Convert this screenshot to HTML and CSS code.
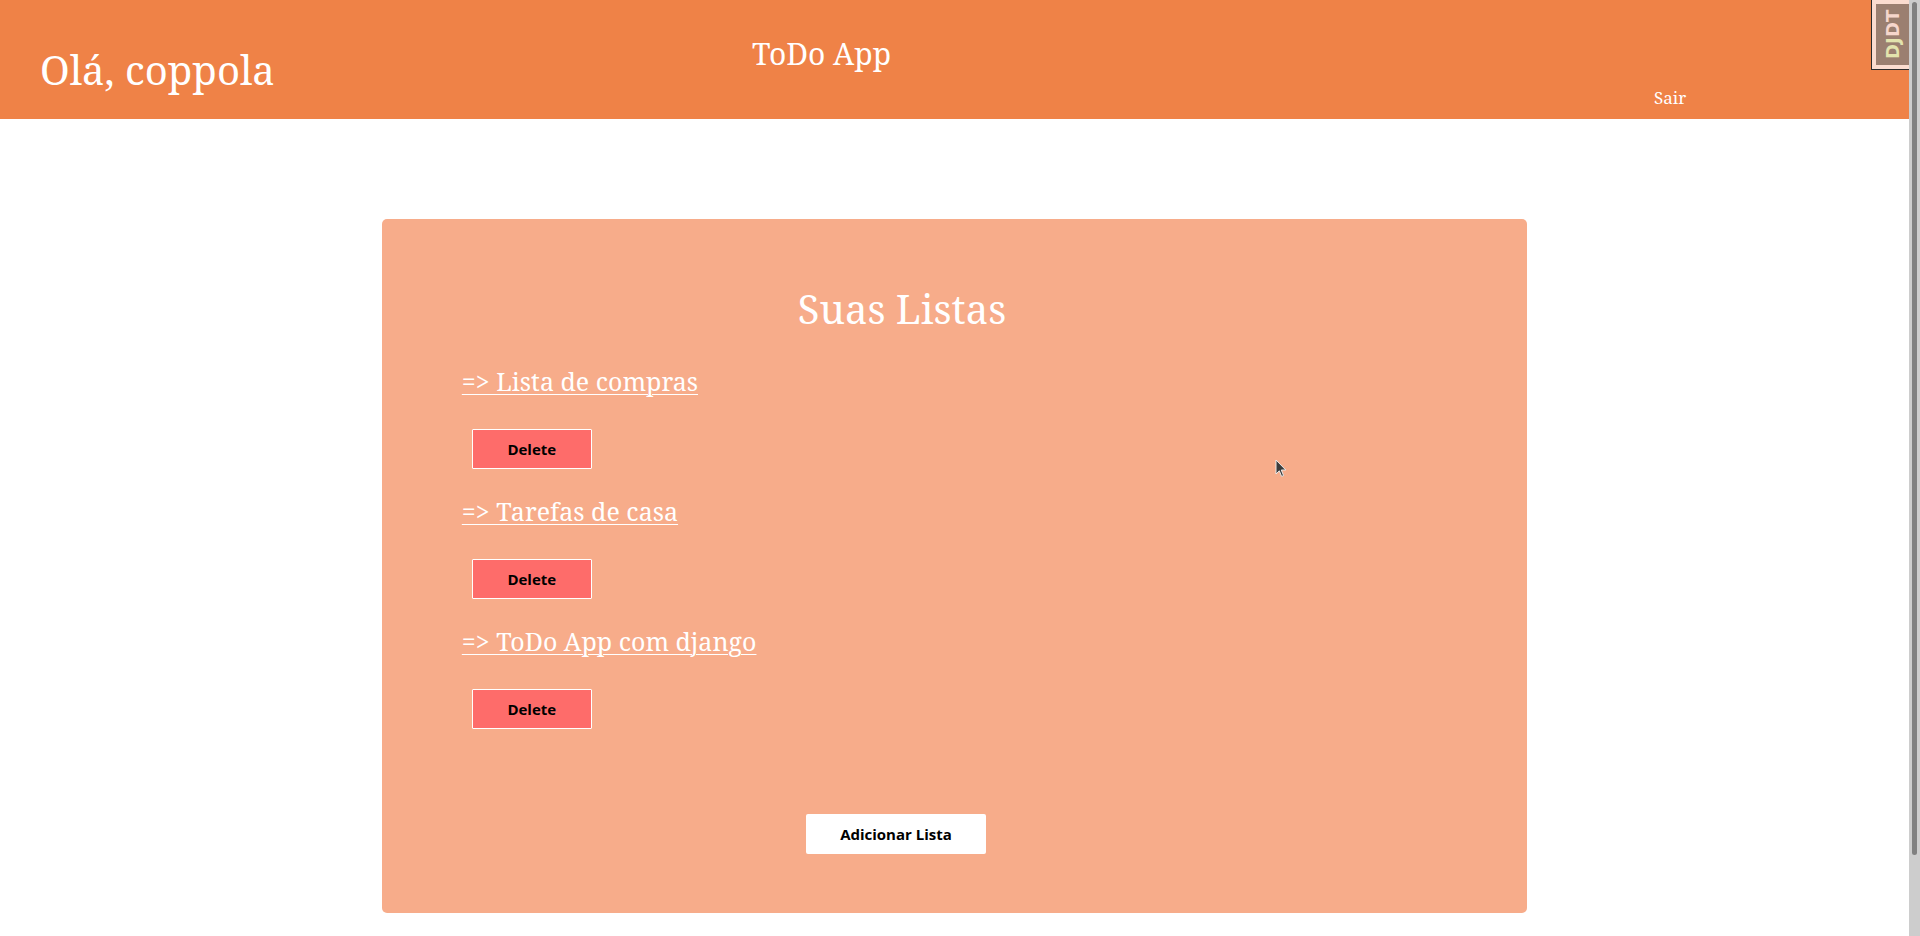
FILE: index.html
```html
<!DOCTYPE html>
<html lang="pt-BR">
<head>
<meta charset="utf-8">
<title>ToDo App</title>
<link rel="stylesheet" href="styles.css">
</head>
<body>
<div class="layout">
  <div class="page">
    <header class="topbar">
      <h1 class="greeting">Olá, coppola</h1>
      <div class="brand">ToDo App</div>
      <a class="logout" href="#">Sair</a>
    </header>

    <div class="djdt-handle">
      <div class="djdt-btn"><span class="djdt-dj">DJ</span><span class="djdt-dt">DT</span></div>
    </div>

    <main class="card">
      <div class="card-inner">
        <h2 class="card-title">Suas Listas</h2>
        <ul class="lists">
          <li class="list-item">
            <a class="list-link" href="#">=&gt; Lista de compras</a>
            <button class="btn-delete" type="button">Delete</button>
          </li>
          <li class="list-item">
            <a class="list-link" href="#">=&gt; Tarefas de casa</a>
            <button class="btn-delete" type="button">Delete</button>
          </li>
          <li class="list-item">
            <a class="list-link" href="#">=&gt; ToDo App com django</a>
            <button class="btn-delete" type="button">Delete</button>
          </li>
        </ul>
        <div class="card-actions">
          <button class="btn-add" type="button">Adicionar Lista</button>
        </div>
      </div>
    </main>

    <svg class="cursor" width="12" height="19" viewBox="0 0 12 19" aria-hidden="true">
      <path d="M1 1 L1 15 L4.3 11.8 L6.6 17.4 L8.6 16.6 L6.3 11 L10.8 11 Z" fill="#3c3c3c" stroke="#e8e8e8" stroke-width="1"/>
    </svg>
  </div>
  <div class="scrollbar"><div class="scroll-thumb"></div></div>
</div>
</body>
</html>
```

FILE: styles.css
```css
html, body {
  margin: 0;
  padding: 0;
  height: 100%;
  overflow: hidden;
  background: #ffffff;
}

body {
  font-family: "Noto Serif", "DejaVu Serif", serif;
}

.layout {
  display: flex;
  height: 936px;
}

.page {
  flex: 1;
  position: relative;
  min-width: 0;
}

/* header */
.topbar {
  display: grid;
  grid-template-columns: 712px 902px auto;
  align-items: start;
  height: 119px;
  padding-left: 40px;
  background: #ef8247;
  color: #ffffff;
  box-sizing: border-box;
}

.greeting {
  margin: 50px 0 0 0;
  font-size: 40px;
  font-weight: normal;
  line-height: 1;
  white-space: nowrap;
}

.brand {
  margin-top: 39px;
  font-size: 30px;
  line-height: 1;
  white-space: nowrap;
}

.logout {
  margin-top: 89px;
  font-size: 17px;
  line-height: 1;
  color: #ffffff;
  text-decoration: none;
  white-space: nowrap;
}

/* django debug toolbar handle */
.djdt-handle {
  position: absolute;
  top: 0;
  right: 0;
  padding: 4px 0 4px 4px;
  background: #fbdccf;
  border-left: 1px solid #2b2b2b;
  border-bottom: 1px solid #2b2b2b;
}

.djdt-btn {
  width: 33px;
  height: 61px;
  background: #9b7f70;
  display: flex;
  align-items: center;
  justify-content: center;
  writing-mode: vertical-rl;
  transform: rotate(180deg);
  font-family: "DejaVu Sans", sans-serif;
  font-weight: bold;
  font-size: 18px;
  line-height: 1;
}

.djdt-dj { color: #e3e3ad; }
.djdt-dt { color: #f6d6cc; }

/* card */
.card {
  display: block;
  width: 60%;
  margin: 100px auto 0;
  background: #f7ac8a;
  border-radius: 5px;
  box-sizing: border-box;
  padding: 70px 185px 59px 80px;
}

.card-title {
  margin: 0 0 40px 0;
  text-align: center;
  font-size: 40px;
  font-weight: normal;
  line-height: 1;
  color: #ffffff;
}

.lists {
  list-style: none;
  margin: 0;
  padding: 0;
  display: flex;
  flex-direction: column;
  gap: 30px;
}

.list-item {
  display: flex;
  flex-direction: column;
  align-items: flex-start;
  gap: 35px;
}

.list-link {
  font-size: 25px;
  line-height: 1;
  color: #ffffff;
  text-decoration: underline;
  text-decoration-thickness: 1px;
  text-underline-offset: 3px;
}

.btn-delete {
  margin-left: 10px;
  width: 120px;
  height: 40px;
  background: #fe6c6a;
  border: 1px solid #ffffff;
  border-radius: 1px;
  font-family: "Open Sans", sans-serif;
  font-weight: bold;
  font-size: 15px;
  color: #000000;
  padding: 0;
}

.card-actions {
  display: flex;
  justify-content: center;
  margin-top: 85px;
}

.btn-add {
  margin-right: 12px;
  width: 180px;
  height: 40px;
  background: #ffffff;
  border: none;
  border-radius: 2px;
  font-family: "Open Sans", sans-serif;
  font-weight: bold;
  font-size: 15px;
  color: #000000;
  padding: 0;
}

.cursor {
  position: absolute;
  left: 1275px;
  top: 459px;
}

/* fake scrollbar */
.scrollbar {
  width: 11px;
  flex: 0 0 11px;
  background: #cdcdcd;
  padding-top: 2px;
  box-sizing: border-box;
}

.scroll-thumb {
  width: 5px;
  height: 853px;
  margin-left: 3px;
  background: #808080;
  border-radius: 3px;
}
```
